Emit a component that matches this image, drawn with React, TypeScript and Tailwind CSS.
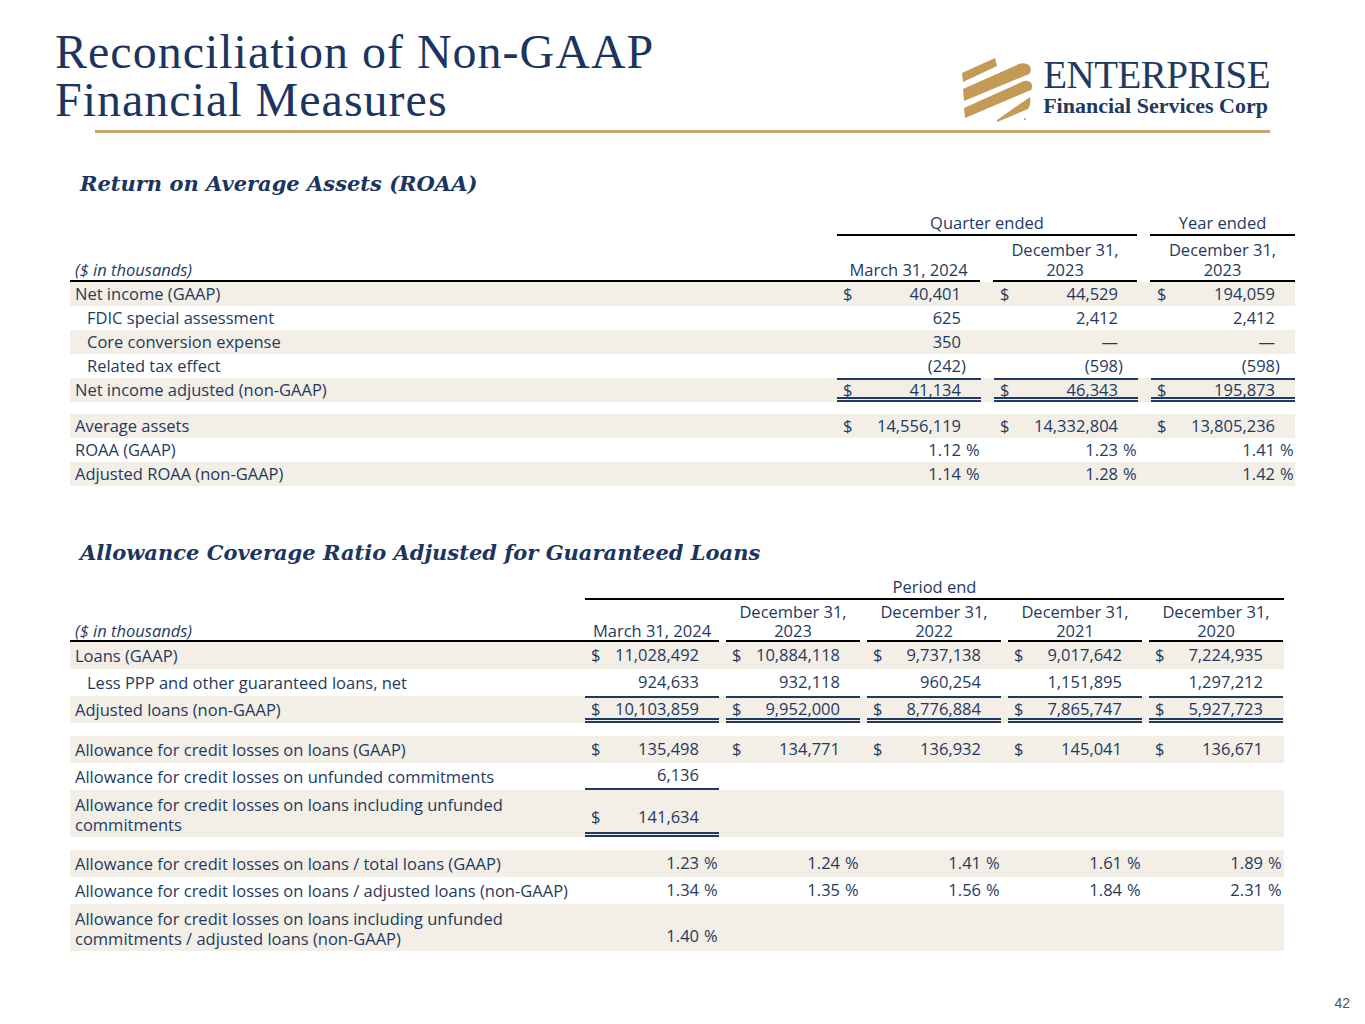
import React from 'react';

type V = { d?: boolean; v: string; s?: string };
type Row = {
  label: string | string[];
  shade?: boolean;
  indent?: boolean;
  vals: (V | null)[];
  top?: boolean[];
  single?: boolean[];
  dbl?: boolean[];
  tall?: boolean;
};

const ink = 'text-[#1f3a60]';

function n(v: string, d = false): V {
  return { v, d };
}
function paren(v: string): V {
  return { v: `(${v}`, s: ')' };
}
function pct(v: string): V {
  return { v, s: '%' };
}

function ValueCell({ val, w, tall, top, single, dbl }: { val: V | null; w: string; tall?: boolean; top?: boolean; single?: boolean; dbl?: boolean }) {
  return (
    <div
      className={[
        'flex justify-between pl-[6px]',
        tall ? 'items-end pb-[2px]' : 'items-center',
        w,
        top ? 'border-t-2 border-[#1f3a60]' : '',
        single ? 'border-b-2 border-[#1f3a60]' : '',
        dbl ? 'border-b-[5px] border-double border-[#1f3a60]' : '',
        dbl && !tall ? 'pt-[3px]' : '',
      ].join(' ')}
    >
      <span>{val?.d ? '$' : ''}</span>
      <span className="flex">
        <span>{val?.v ?? ''}</span>
        <span className={val?.s === '%' ? 'w-[20px] pl-[5px] text-left' : 'w-[20px] text-left'}>{val?.s ?? ''}</span>
      </span>
    </div>
  );
}

function DataTable({ rows, labelW, colW, gap, rowH, tallH, spacer }: { rows: (Row | 'gap')[]; labelW: string; colW: string; gap: string; rowH: string; tallH: string; spacer: string }) {
  return (
    <div className="flex flex-col">
      {rows.map((r, i) =>
        r === 'gap' ? (
          <div key={i} className={spacer} />
        ) : (
          <div key={i} className={`flex items-stretch ${r.tall ? tallH : rowH} ${r.shade ? 'bg-[#f3eee6]' : ''}`}>
            <div className={`${labelW} flex ${r.tall ? 'items-end pb-[2px]' : 'items-center'} ${r.indent ? 'pl-[17px]' : 'pl-[5px]'} leading-[20px]`}>
              {Array.isArray(r.label) ? (
                <span>
                  {r.label[0]}
                  <br />
                  {r.label[1]}
                </span>
              ) : (
                r.label
              )}
            </div>
            <div className="flex">
              {r.vals.map((v, j) => (
                <div key={j} className={`flex ${j === 0 ? '' : gap}`}>
                  <ValueCell val={v} w={colW} tall={r.tall} top={r.top?.[j]} single={r.single?.[j]} dbl={r.dbl?.[j]} />
                </div>
              ))}
            </div>
          </div>
        ),
      )}
    </div>
  );
}

const all3 = [true, true, true];
const all5 = [true, true, true, true, true];

const roaa: (Row | 'gap')[] = [
  { label: 'Net income (GAAP)', shade: true, vals: [n('40,401', true), n('44,529', true), n('194,059', true)] },
  { label: 'FDIC special assessment', indent: true, vals: [n('625'), n('2,412'), n('2,412')] },
  { label: 'Core conversion expense', indent: true, shade: true, vals: [n('350'), n('—'), n('—')] },
  { label: 'Related tax effect', indent: true, vals: [paren('242'), paren('598'), paren('598')] },
  { label: 'Net income adjusted (non-GAAP)', shade: true, top: all3, dbl: all3, vals: [n('41,134', true), n('46,343', true), n('195,873', true)] },
  'gap',
  { label: 'Average assets', shade: true, vals: [n('14,556,119', true), n('14,332,804', true), n('13,805,236', true)] },
  { label: 'ROAA (GAAP)', vals: [pct('1.12'), pct('1.23'), pct('1.41')] },
  { label: 'Adjusted ROAA (non-GAAP)', shade: true, vals: [pct('1.14'), pct('1.28'), pct('1.42')] },
];

const acr: (Row | 'gap')[] = [
  { label: 'Loans (GAAP)', shade: true, vals: [n('11,028,492', true), n('10,884,118', true), n('9,737,138', true), n('9,017,642', true), n('7,224,935', true)] },
  { label: 'Less PPP and other guaranteed loans, net', indent: true, vals: [n('924,633'), n('932,118'), n('960,254'), n('1,151,895'), n('1,297,212')] },
  { label: 'Adjusted loans (non-GAAP)', shade: true, top: all5, dbl: all5, vals: [n('10,103,859', true), n('9,952,000', true), n('8,776,884', true), n('7,865,747', true), n('5,927,723', true)] },
  'gap',
  { label: 'Allowance for credit losses on loans (GAAP)', shade: true, vals: [n('135,498', true), n('134,771', true), n('136,932', true), n('145,041', true), n('136,671', true)] },
  { label: 'Allowance for credit losses on unfunded commitments', single: [true], vals: [n('6,136'), null, null, null, null] },
  { label: ['Allowance for credit losses on loans including unfunded', 'commitments'], shade: true, tall: true, dbl: [true], vals: [n('141,634', true), null, null, null, null] },
  'gap',
  { label: 'Allowance for credit losses on loans / total loans (GAAP)', shade: true, vals: [pct('1.23'), pct('1.24'), pct('1.41'), pct('1.61'), pct('1.89')] },
  { label: 'Allowance for credit losses on loans / adjusted loans (non-GAAP)', vals: [pct('1.34'), pct('1.35'), pct('1.56'), pct('1.84'), pct('2.31')] },
  { label: ['Allowance for credit losses on loans including unfunded', 'commitments / adjusted loans (non-GAAP)'], shade: true, tall: true, vals: [pct('1.40'), null, null, null, null] },
];

function Logo() {
  return (
    <div className="flex items-center gap-[8px]">
      <svg width="74" height="66" viewBox="0 0 74 66" className="mt-[2px]">
        <g fill="#c49a57">
          <path d="M1 17 L34 2 L36 10 L2 26 Z" />
          <path d="M2 33 L58 8 C67 5 73 12 68 18 L3 45 Z" />
          <path d="M3 52 L63 25 C70 23 73 30 70 34 L4 62 Z" />
          <path d="M36 64 L69 41 C70 46 69 50 67 53 L36 66 Z" />
        </g>
        <circle cx="64" cy="63" r="1" fill="#9a9a9a" />
      </svg>
      <div className="flex flex-col text-[#1f3a60] font-['Liberation_Serif',serif]">
        <span className="text-[39px] leading-[34px] tracking-[-0.5px]">ENTERPRISE</span>
        <span className="text-[22px] font-bold leading-[26px] mt-[1px]">Financial Services Corp</span>
      </div>
    </div>
  );
}

export default function App() {
  return (
    <div className="relative flex h-[1024px] w-[1365px] flex-col bg-white">
      <header className="flex items-start justify-between pr-[95px] pl-[55px] pt-[28px]">
        <h1 className="font-['Liberation_Serif',serif] text-[48px] leading-[48px] tracking-[1px] text-[#1c355e]">
          Reconciliation of Non-GAAP
          <br />
          Financial Measures
        </h1>
        <div className="pt-[26px]">
          <Logo />
        </div>
      </header>
      <div className="mx-[95px] mt-[6px] h-[3px] bg-[#c5a46d]" />

      <main className={`flex flex-col pl-[70px] font-['Open_Sans',sans-serif] text-[16.5px] ${ink}`}>
        <h2 className="mt-[37px] pl-[10px] font-['DejaVu_Serif',serif] text-[21px] font-bold italic leading-[28px] text-[#1c355e]">
          Return on Average Assets (ROAA)
        </h2>

        <div className="mt-[15px] flex w-[1225px]">
          <div className="w-[767px]" />
          <div className="w-[300px] border-b-2 border-black pb-[1px] text-center leading-[20px]">Quarter ended</div>
          <div className="ml-[13px] w-[145px] border-b-2 border-black pb-[1px] text-center leading-[20px]">Year ended</div>
        </div>
        <div className="mt-[4px] flex w-[1225px] items-stretch leading-[20px]">
          <div className="flex w-[767px] items-end border-b-2 border-black pl-[5px] italic">($ in thousands)</div>
          <div className="flex w-[143px] items-end justify-center border-b-2 border-black">March 31, 2024</div>
          <div className="ml-[13px] w-[144px] border-b-2 border-black text-center">
            December 31,
            <br />
            2023
          </div>
          <div className="ml-[13px] w-[145px] border-b-2 border-black text-center">
            December 31,
            <br />
            2023
          </div>
        </div>
        <div className="w-[1225px]">
          <DataTable rows={roaa} labelW="w-[767px]" colW="w-[144px]" gap="ml-[13px]" rowH="h-[24px]" tallH="h-[47px]" spacer="h-[12px]" />
        </div>

        <h2 className="mt-[53px] pl-[10px] font-['DejaVu_Serif',serif] text-[21px] font-bold italic leading-[28px] text-[#1c355e]">
          Allowance Coverage Ratio Adjusted for Guaranteed Loans
        </h2>

        <div className="mt-[10px] flex w-[1214px]">
          <div className="w-[515px]" />
          <div className="w-[699px] border-b-2 border-black pb-[1px] text-center leading-[20px]">Period end</div>
        </div>
        <div className="mt-[2px] flex w-[1214px] items-stretch leading-[19px]">
          <div className="flex w-[515px] items-end border-b-2 border-black pl-[5px] italic">($ in thousands)</div>
          <div className="flex w-[134px] items-end justify-center border-b-2 border-black">March 31, 2024</div>
          {['2023', '2022', '2021', '2020'].map((y) => (
            <div key={y} className="ml-[7px] w-[134px] border-b-2 border-black text-center">
              December 31,
              <br />
              {y}
            </div>
          ))}
        </div>
        <div className="w-[1214px]">
          <DataTable rows={acr} labelW="w-[515px]" colW="w-[134px]" gap="ml-[7px]" rowH="h-[27px]" tallH="h-[47px]" spacer="h-[13px]" />
        </div>
      </main>

      <div className="mt-auto flex justify-end pr-[15px] pb-[10px] font-['Liberation_Sans',sans-serif] text-[14px] text-[#555]">42</div>
    </div>
  );
}
